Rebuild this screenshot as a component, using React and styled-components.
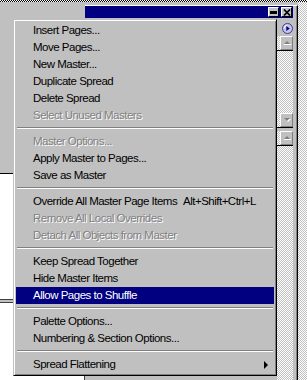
import styled, { createGlobalStyle } from "styled-components";

const GlobalStyle = createGlobalStyle`
  html, body {
    margin: 0;
    padding: 0;
    background: #c0c0c0;
  }
  body {
    font-family: "Liberation Sans", Arial, sans-serif;
  }
`;

const checker = (a, b) => `
  background-color: ${b};
  background-image: conic-gradient(${a} 25%, ${b} 0 50%, ${a} 0 75%, ${b} 0);
  background-size: 2px 2px;
`;

const Screen = styled.div`
  position: relative;
  width: 307px;
  height: 380px;
  overflow: hidden;
  display: flex;
  flex-direction: column;
  background: #c0c0c0;
  font-family: "Liberation Sans", Arial, sans-serif;
  font-size: 11.5px;
`;

const TopRule = styled.div`
  flex: none;
  height: 2px;
  ${checker("#000", "#fff")}
`;

const Workspace = styled.div`
  flex: 1;
  min-height: 0;
  display: flex;
`;

const DocPane = styled.div`
  flex: none;
  width: 85px;
  display: flex;
  flex-direction: column;
`;

const DocTop = styled.div`
  flex: none;
  height: 171px;
  background: #c0c0c0;
`;

const DocPage = styled.div`
  flex: 1;
  background: #fff;
  border-top: 1px solid #000;
  border-right: 1px solid #404040;
  padding-top: 125px;
`;

const DocRules = styled.div`
  height: 2px;
  border-top: 1px solid #404040;
  border-bottom: 1px solid #404040;
  background: #c0c0c0;
`;

const Palette = styled.div`
  flex: none;
  width: 213px;
  box-sizing: border-box;
  margin-top: 3px;
  display: flex;
  flex-direction: column;
  background: #c0c0c0;
  border-top: 1px solid #fff;
  border-right: 1px solid #000;
  padding-right: 4px;
  box-shadow: inset -1px 0 #808080;
`;

const TitleBar = styled.div`
  flex: none;
  height: 12px;
  background: #000080;
  display: flex;
  justify-content: flex-end;
  align-items: center;
  gap: 2px;
  padding-right: 1px;
`;

const TitleButton = styled.div`
  width: 11px;
  height: 10px;
  box-sizing: border-box;
  background: #c0c0c0;
  border: 1px solid;
  border-color: #fff #000 #000 #fff;
  display: grid;
  place-items: center;
`;

const MinGlyph = styled.div`
  width: 7px;
  height: 3px;
  background: #000;
`;

const PaletteBody = styled.div`
  flex: 1;
  min-height: 0;
  display: flex;
`;

const PaneContent = styled.div`
  flex: 1;
  background: #c0c0c0;
`;

const ScrollColumn = styled.div`
  flex: none;
  width: 16px;
  display: flex;
  flex-direction: column;
`;

const IconArea = styled.div`
  flex: none;
  height: 18px;
  box-sizing: border-box;
  padding: 5px 0 0 5px;
  background: #c0c0c0;
`;

const ButtonRow = styled.div`
  flex: none;
  height: 14px;
  padding-left: 3px;
  border-bottom: 1px solid #000;
  ${checker("#fff", "#c0c0c0")}
`;

const ScrollButton = styled.div`
  width: 13px;
  height: 14px;
  box-sizing: border-box;
  background: #c0c0c0;
  border: 1px solid;
  border-color: #fff #808080 #808080 #fff;
  display: grid;
  place-items: center;
`;

const Track = styled.div`
  flex: ${({ $grow }) => ($grow ? 1 : "none")};
  height: ${({ $h }) => ($h ? `${$h}px` : "auto")};
  ${checker("#fff", "#c0c0c0")}
`;

const PaneGap = styled.div`
  flex: none;
  height: 3px;
  background: #c0c0c0;
`;

const Desktop = styled.div`
  flex: 1;
  ${checker("#fff", "#c0c0c0")}
`;

const Menu = styled.div`
  position: absolute;
  left: 13px;
  top: 19px;
  width: 264px;
  box-sizing: border-box;
  padding: 2px;
  background: #c0c0c0;
  border: 1px solid;
  border-color: #c0c0c0 #000 #000 #c0c0c0;
  box-shadow: inset 1px 1px #fff, inset -1px -1px #808080;
`;

const Item = styled.div`
  height: 17px;
  line-height: 17px;
  display: grid;
  grid-template-columns: 150px 1fr 10px;
  align-items: center;
  padding-left: 17px;
  white-space: nowrap;
  letter-spacing: -0.5px;
  color: ${({ $active, $disabled }) =>
    $active ? "#fff" : $disabled ? "#808080" : "#000"};
  background: ${({ $active }) => ($active ? "#000080" : "transparent")};
  text-shadow: ${({ $disabled }) => ($disabled ? "1px 1px 0 #fff" : "none")};
`;

const Shortcut = styled.span`
  letter-spacing: -0.5px;
`;

const SubArrow = styled.span`
  width: 0;
  height: 0;
  border-top: 4px solid transparent;
  border-bottom: 4px solid transparent;
  border-left: 4px solid #000;
  justify-self: start;
`;

const Separator = styled.div`
  height: 0;
  margin: 3px 1px 4px 1px;
  border-top: 1px solid #808080;
  border-bottom: 1px solid #fff;
`;

const menu = [
  ["Insert Pages..."],
  ["Move Pages..."],
  ["New Master..."],
  ["Duplicate Spread"],
  ["Delete Spread"],
  ["Select Unused Masters", { disabled: true }],
  "-",
  ["Master Options...", { disabled: true }],
  ["Apply Master to Pages..."],
  ["Save as Master"],
  "-",
  ["Override All Master Page Items", { shortcut: "Alt+Shift+Ctrl+L" }],
  ["Remove All Local Overrides", { disabled: true }],
  ["Detach All Objects from Master", { disabled: true }],
  "-",
  ["Keep Spread Together"],
  ["Hide Master Items"],
  ["Allow Pages to Shuffle", { active: true }],
  "-",
  ["Palette Options..."],
  ["Numbering & Section Options..."],
  "-",
  ["Spread Flattening", { submenu: true }],
];

const CloseIcon = () => (
  <svg width="8" height="7" viewBox="0 0 8 7">
    <path d="M1 0.5 L7 6.5 M7 0.5 L1 6.5" stroke="#000" strokeWidth="1.7" />
  </svg>
);

const MenuButtonIcon = () => (
  <svg width="11" height="11" viewBox="0 0 11 11">
    <circle cx="5.5" cy="5.5" r="5" fill="#c4c4ee" stroke="#3c3c8c" />
    <path d="M2.3 5 A3.3 3.3 0 0 1 5 2.2" stroke="#fff" fill="none" />
    <polygon points="4.3,3 7.8,5.5 4.3,8" fill="#000080" />
  </svg>
);

const ArrowGlyph = ({ down }) => (
  <svg width="8" height="6" viewBox="0 0 8 6">
    {down ? (
      <>
        <polygon points="2,2 5,5 8,2" fill="#fff" />
        <polygon points="1,1 4,4 7,1" fill="#808080" />
      </>
    ) : (
      <>
        <line x1="1" y1="4.5" x2="8" y2="4.5" stroke="#fff" />
        <polygon points="1,4 4,1 7,4" fill="#808080" />
      </>
    )}
  </svg>
);

export default function App() {
  return (
    <>
      <GlobalStyle />
      <Screen>
        <TopRule />
        <Workspace>
          <DocPane>
            <DocTop />
            <DocPage>
              <DocRules />
            </DocPage>
          </DocPane>

          <Palette>
            <TitleBar>
              <TitleButton>
                <MinGlyph />
              </TitleButton>
              <TitleButton>
                <CloseIcon />
              </TitleButton>
            </TitleBar>
            <PaletteBody>
              <PaneContent />
              <ScrollColumn>
                <IconArea>
                  <MenuButtonIcon />
                </IconArea>
                <ButtonRow>
                  <ScrollButton>
                    <ArrowGlyph />
                  </ScrollButton>
                </ButtonRow>
                <Track $h={62} />
                <ButtonRow>
                  <ScrollButton>
                    <ArrowGlyph down />
                  </ScrollButton>
                </ButtonRow>
                <PaneGap />
                <ButtonRow>
                  <ScrollButton>
                    <ArrowGlyph />
                  </ScrollButton>
                </ButtonRow>
                <Track $grow />
              </ScrollColumn>
            </PaletteBody>
          </Palette>

          <Desktop />
        </Workspace>

        <Menu>
          {menu.map((entry, i) => {
            if (entry === "-") return <Separator key={i} />;
            const [label, opts = {}] = entry;
            return (
              <Item key={i} $active={opts.active} $disabled={opts.disabled}>
                <span>{label}</span>
                <Shortcut>{opts.shortcut || ""}</Shortcut>
                {opts.submenu ? <SubArrow /> : <span />}
              </Item>
            );
          })}
        </Menu>
      </Screen>
    </>
  );
}
